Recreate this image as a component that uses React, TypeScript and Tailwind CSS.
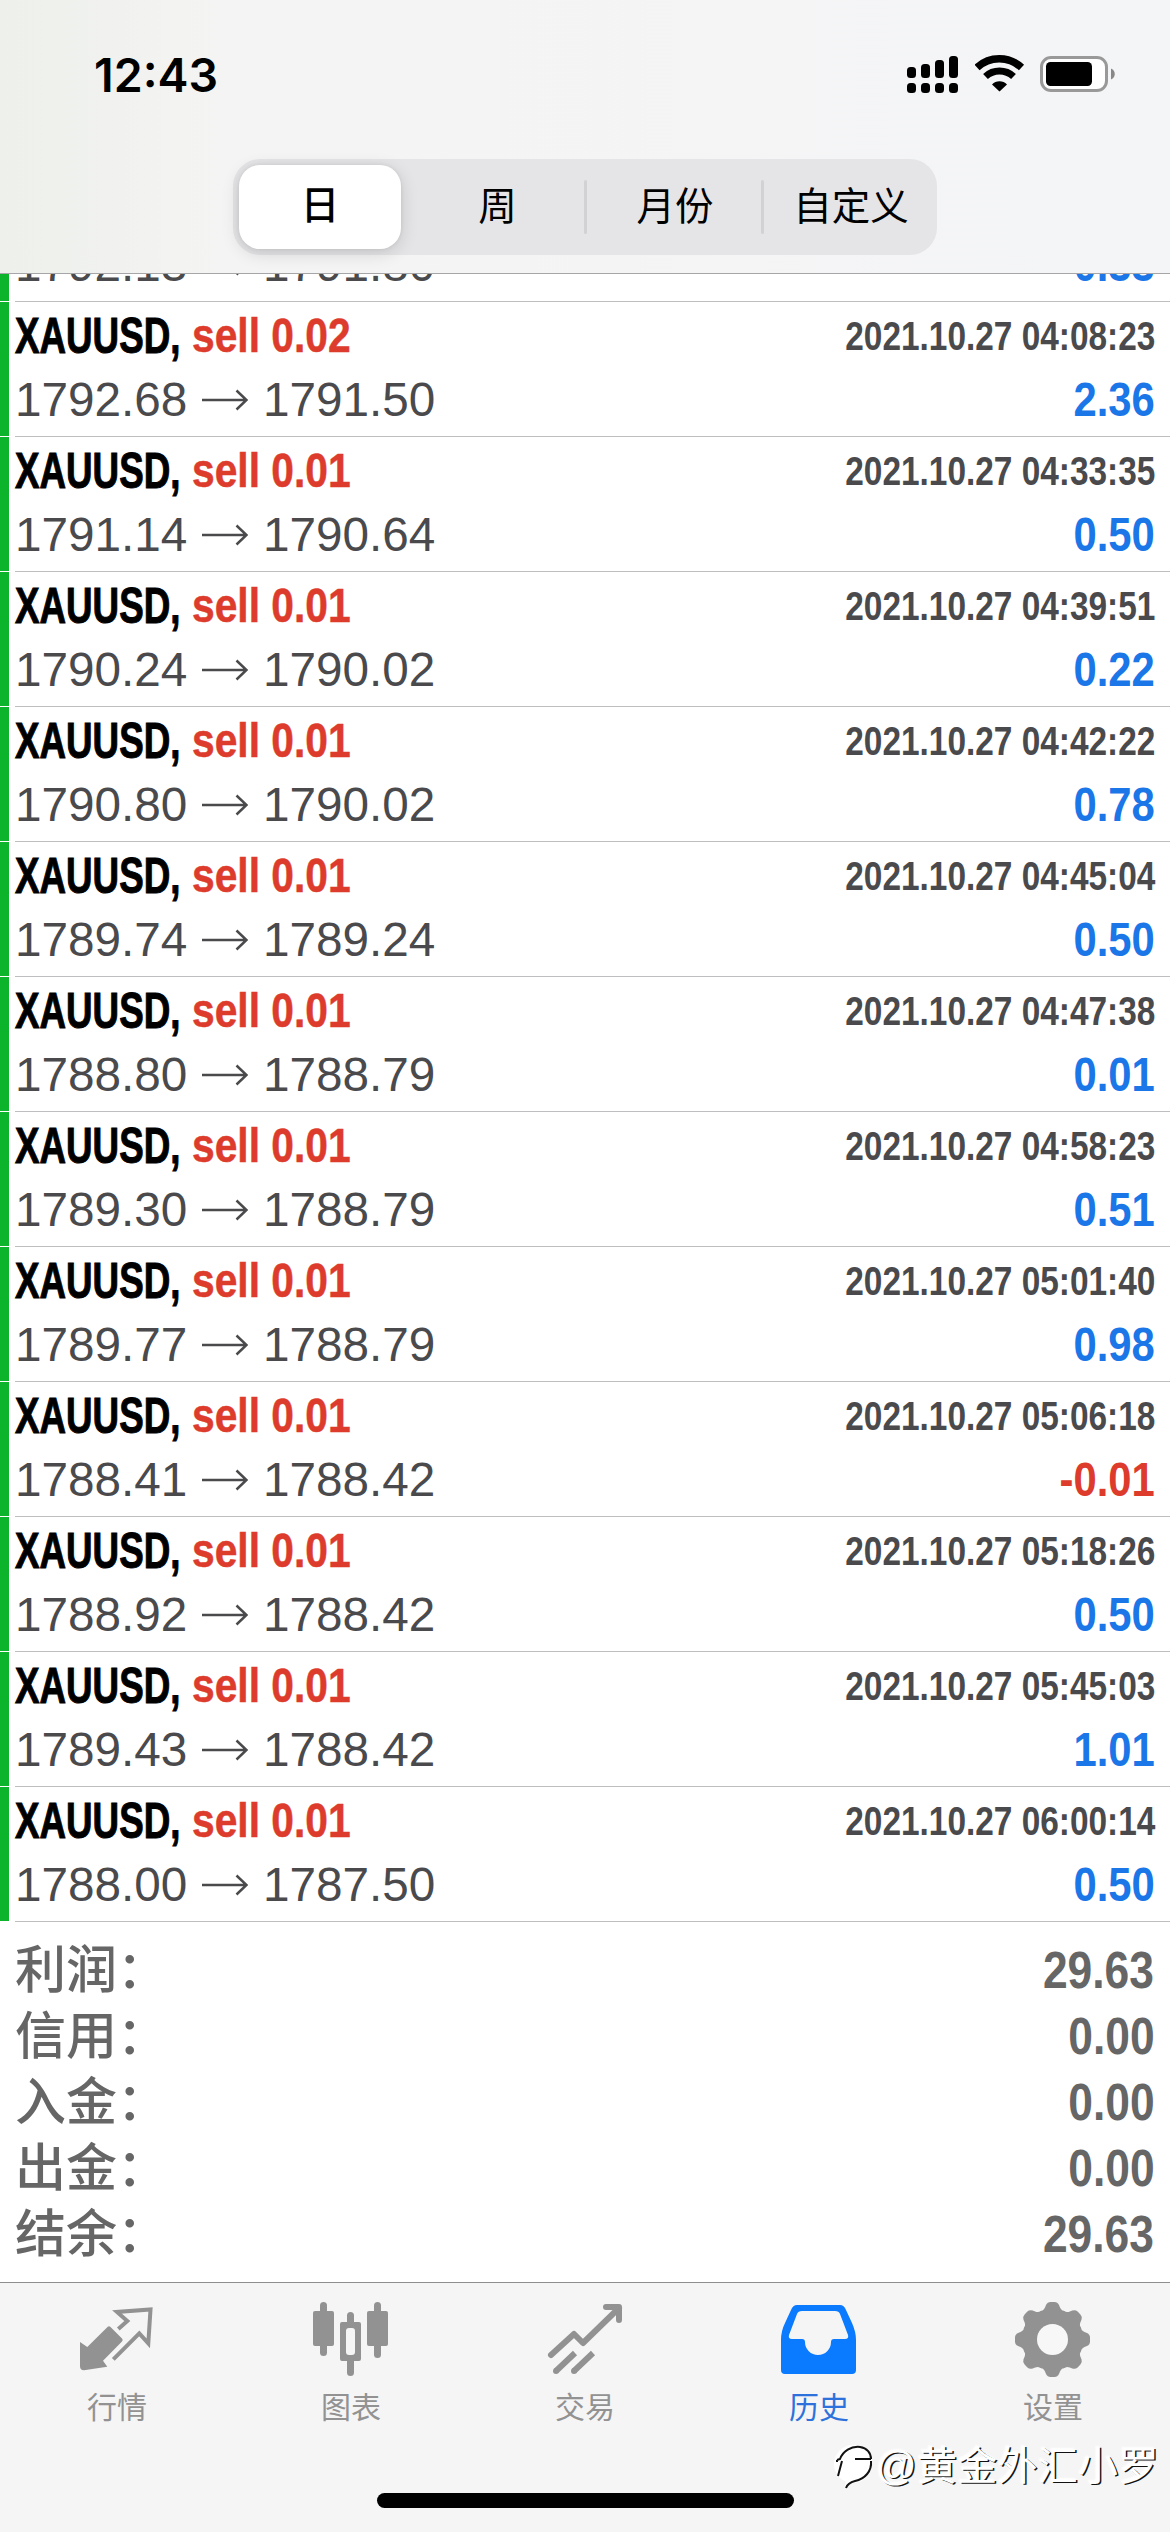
import type { ReactNode } from "react";

interface Deal {
  volume: string;
  open: string;
  close: string;
  time: string;
  profit: string;
}

const deals: Deal[] = [
  { volume: "0.02", open: "1792.68", close: "1791.50", time: "2021.10.27 04:08:23", profit: "2.36" },
  { volume: "0.01", open: "1791.14", close: "1790.64", time: "2021.10.27 04:33:35", profit: "0.50" },
  { volume: "0.01", open: "1790.24", close: "1790.02", time: "2021.10.27 04:39:51", profit: "0.22" },
  { volume: "0.01", open: "1790.80", close: "1790.02", time: "2021.10.27 04:42:22", profit: "0.78" },
  { volume: "0.01", open: "1789.74", close: "1789.24", time: "2021.10.27 04:45:04", profit: "0.50" },
  { volume: "0.01", open: "1788.80", close: "1788.79", time: "2021.10.27 04:47:38", profit: "0.01" },
  { volume: "0.01", open: "1789.30", close: "1788.79", time: "2021.10.27 04:58:23", profit: "0.51" },
  { volume: "0.01", open: "1789.77", close: "1788.79", time: "2021.10.27 05:01:40", profit: "0.98" },
  { volume: "0.01", open: "1788.41", close: "1788.42", time: "2021.10.27 05:06:18", profit: "-0.01" },
  { volume: "0.01", open: "1788.92", close: "1788.42", time: "2021.10.27 05:18:26", profit: "0.50" },
  { volume: "0.01", open: "1789.43", close: "1788.42", time: "2021.10.27 05:45:03", profit: "1.01" },
  { volume: "0.01", open: "1788.00", close: "1787.50", time: "2021.10.27 06:00:14", profit: "0.50" },
];

const totals = [
  { label: "利润", value: "29.63" },
  { label: "信用", value: "0.00" },
  { label: "入金", value: "0.00" },
  { label: "出金", value: "0.00" },
  { label: "结余", value: "29.63" },
];

export default function App() {
  return (
    <div className="flex h-[2532px] w-[1170px] flex-col overflow-hidden bg-white font-['Liberation_Sans','Noto_Sans_CJK_SC',sans-serif]">
      <header className="h-[274px] shrink-0 border-b border-[#a6a6a8] bg-linear-to-r from-[#edf0eb] via-[#f5f4f4] via-20% to-[#f4f5f7]">
        <StatusBar />
        <PeriodTabs />
      </header>
      <main className="flex-1">
        {/* row scrolled halfway under the header */}
        <div className="flex h-7 flex-col justify-end overflow-hidden">
          <PriceRow
            deal={{ volume: "0.01", open: "1792.13", close: "1791.80", time: "2021.10.27 04:02:11", profit: "0.33" }}
          />
        </div>
        {deals.map((deal) => (
          <DealRow key={deal.time} deal={deal} />
        ))}
        <Totals />
      </main>
      <TabBar />
    </div>
  );
}

function StatusBar() {
  return (
    <div className="flex h-[159px] items-start justify-between pr-[55px] pl-[94px]">
      <span className="mt-[46px] font-['Inter',sans-serif] text-[46.5px] leading-[58px] font-semibold">
        12:43
      </span>
      <div className="mt-[54px] flex h-10 items-start">
        <svg className="h-10 w-[68px]" viewBox="0 0 68 40">
          <rect x="0" y="13" width="9" height="11" rx="3.5" />
          <rect x="14" y="10" width="9" height="14" rx="3.5" />
          <rect x="28" y="6" width="9" height="18" rx="3.5" />
          <rect x="42" y="2" width="9" height="22" rx="3.5" />
          <rect x="0" y="29" width="9" height="10" rx="3.5" />
          <rect x="14" y="29" width="9" height="10" rx="3.5" />
          <rect x="28" y="29" width="9" height="10" rx="3.5" />
          <rect x="42" y="29" width="9" height="10" rx="3.5" />
        </svg>
        <svg className="h-10 w-[65px]" viewBox="0 0 65 40">
          <path d="M2 13.500a32.500 32.500 0 0 1 44.500 0" fill="none" stroke="#000" strokeWidth="7.500" />
          <path d="M10.500 22.500a20.500 20.500 0 0 1 28 0" fill="none" stroke="#000" strokeWidth="7" />
          <path d="M24.500 37.500l-7.500-7a10.500 10.500 0 0 1 15 0z" />
        </svg>
        <svg className="h-10 w-[75px]" viewBox="0 0 75 40">
          <rect x="1.500" y="3.500" width="65" height="33" rx="9.500" fill="#fff" stroke="#999" strokeWidth="3" />
          <rect x="6" y="8" width="46" height="24" rx="4.500" />
          <path d="M71 14.500v11c5-2 5-9 0-11z" fill="#888" />
        </svg>
      </div>
    </div>
  );
}

function PeriodTabs() {
  return (
    <div className="mx-auto flex h-24 w-[704px] items-center rounded-[27px] bg-[#e5e5e7] pl-[6px] text-[38.5px] leading-none">
      <div className="flex h-[84px] w-[162px] items-center justify-center rounded-[21px] bg-white pb-px font-medium shadow-[0_4px_18px_rgba(0,0,0,0.14),0_0_4px_rgba(0,0,0,0.08)]">
        日
      </div>
      <div className="flex w-[183px] justify-center pl-[10px]">周</div>
      <div className="h-[54px] w-[3px] rounded-full bg-[#d2d2d5]" />
      <div className="flex w-[174px] justify-center pl-[2px]">月份</div>
      <div className="h-[54px] w-[3px] rounded-full bg-[#d2d2d5]" />
      <div className="flex w-[173px] justify-center pl-px">自定义</div>
    </div>
  );
}

function DealRow({ deal }: { deal: Deal }) {
  return (
    <div className="flex h-[135px] shrink-0">
      <div className="h-[134px] w-[9px] bg-[#0cb42b]" />
      <div className="ml-[6px] flex-1 border-b border-[#bebec0] pt-[3px]">
        <div className="flex h-[62px] items-center whitespace-nowrap">
          <Condensed className="w-[177px] scale-x-[0.735] text-[50px] text-black [-webkit-text-stroke:1px_#000]">
            XAUUSD,
          </Condensed>
          <Condensed className="flex-1 scale-x-[0.832] text-[49px] text-[#dd3b2c] [-webkit-text-stroke:0.5px_#dd3b2c]">
            sell {deal.volume}
          </Condensed>
          <CondensedEnd className="scale-x-[0.835] pr-[18px] text-[40px] leading-[58px] text-[#4a4a4d]">
            {deal.time}
          </CondensedEnd>
        </div>
        <Prices deal={deal} />
      </div>
    </div>
  );
}

// only the second line of a row, for the one cut by the header
function PriceRow({ deal }: { deal: Deal }) {
  return (
    <div className="flex h-[70px] shrink-0">
      <div className="h-[69px] w-[9px] bg-[#0cb42b]" />
      <div className="ml-[6px] flex-1 border-b border-[#bebec0]">
        <Prices deal={deal} />
      </div>
    </div>
  );
}

function Prices({ deal }: { deal: Deal }) {
  const loss = deal.profit.startsWith("-");
  return (
    <div className="flex h-[66px] items-center justify-between text-[48px] text-[#4a4a4d]">
      <div className="flex items-center text-[47.7px]">
        <span className="w-[187px]">{deal.open}</span>
        <svg className="mr-[15px] h-6 w-[46px]" viewBox="0 0 46 24" fill="none" stroke="currentColor">
          <path d="M0 12h44M34.500 2.500l10 9.500-10 9.500" strokeWidth="2.500" />
        </svg>
        <span>{deal.close}</span>
      </div>
      <CondensedEnd
        className={loss ? "scale-x-[0.87] pr-[18px] text-[#dd3b2c]" : "scale-x-[0.87] pr-[18px] text-[#1b76e8]"}
      >
        {deal.profit}
      </CondensedEnd>
    </div>
  );
}

function Condensed({ className, children }: { className: string; children: ReactNode }) {
  return <span className={`inline-block origin-left font-bold ${className}`}>{children}</span>;
}

function CondensedEnd({ className, children }: { className: string; children: ReactNode }) {
  return <span className={`inline-block origin-right font-bold ${className}`}>{children}</span>;
}

function Totals() {
  return (
    <div className="pt-[16px] pl-[15px] font-bold text-[#666]">
      {totals.map((row) => (
        <div key={row.label} className="flex h-[66px] items-center justify-between">
          <span className="text-[51px] leading-[66px] font-medium">{row.label}：</span>
          <CondensedEnd className="scale-x-[0.87] pr-[18px] text-[51px] leading-[66px]">{row.value}</CondensedEnd>
        </div>
      ))}
    </div>
  );
}

function TabBar() {
  return (
    <nav className="relative h-[250px] shrink-0 border-t border-[#8e8e90] bg-[#f5f5f5]">
      <div className="flex pt-[18px] text-[30px] text-[#929292]">
        <Tab label="行情">
          <path
            d="M1 41l7.300 5L28.500 26q1.500-1.500 3 0L43 37.500q1.500 1.500 0 3L24 59.700l4.300 6L5 69.300q-4 0-4-4z"
            fill="currentColor"
          />
          <path
            d="M39.300 28l9-8L38 11l33.500-2.500-2.200 33.800-9-10-26 26"
            fill="none"
            stroke="currentColor"
            strokeWidth="4"
          />
        </Tab>
        <Tab label="图表">
          <g fill="currentColor">
            <rect x="0" y="10" width="21" height="35" rx="2" />
            <rect x="7" y="1" width="7" height="54" rx="3.500" />
            <rect x="54" y="10" width="21" height="35" rx="2" />
            <rect x="61" y="1" width="7" height="56" rx="3.500" />
            <path
              fillRule="evenodd"
              d="M34 21v-6.500a3.500 3.500 0 0 1 7 0V21h5q2 0 2 2v35q0 2-2 2h-5v11.500a3.500 3.500 0 0 1-7 0V60h-5q-2 0-2-2V23q0-2 2-2zM36 27q-3 0-3 3v21q0 3 3 3h3q3 0 3-3V30q0-3-3-3z"
            />
          </g>
        </Tab>
        <Tab label="交易">
          <g fill="none" stroke="currentColor" strokeWidth="6" strokeLinejoin="round">
            <path d="M4 54l23-21 9 9L72 7M59 6h13v13" strokeLinecap="round" />
            <path d="M9 70l19-18M27 70l19-18" />
          </g>
          <circle cx="9" cy="70" r="3" fill="currentColor" />
          <circle cx="27" cy="70" r="3" fill="currentColor" />
        </Tab>
        <Tab label="历史" active>
          <path
            fillRule="evenodd"
            fill="#0a7aff"
            d="M16 4h43q4 0 6 5l6 13q4 9 4 17v30q0 4-4 4H4q-4 0-4-4V39q0-9 4-17l6-13q2-5 6-5zM21 10q-4 0-5 3L8 34q-1 4 3 4h10q3 0 3 3a13 13 0 0 0 26 0q0-3 3-3h11q4 0 3-4l-8-21q-1-3-5-3z"
          />
        </Tab>
        <Tab label="设置">
          <Gear />
        </Tab>
      </div>
      <div className="absolute top-[210px] left-[377px] h-[15px] w-[417px] rounded-full bg-black" />
      <Watermark />
    </nav>
  );
}

function Tab({ label, active, children }: { label: string; active?: boolean; children: ReactNode }) {
  return (
    <div className={active ? "flex w-[234px] flex-col items-center text-[#2d72dc]" : "flex w-[234px] flex-col items-center"}>
      <svg className="h-[76px] w-[76px]" viewBox="0 0 76 76">
        {children}
      </svg>
      <span className="mt-[9px] leading-[44px]">{label}</span>
    </div>
  );
}

function Gear() {
  return (
    <g transform="translate(37.500 38.500)" fill="currentColor">
      {[0, 45, 90, 135, 180, 225, 270, 315].map((angle) => (
        <path
          key={angle}
          transform={`rotate(${angle})`}
          d="M-13-28q4-.5 5.500-4l1-2.500q1.500-3 4.500-3h4q3 0 4.500 3l1 2.500q1.500 3.500 5.500 4L0 0z"
        />
      ))}
      <circle r="29.500" />
      <circle r="15.500" fill="#f7f7f7" />
    </g>
  );
}

function Watermark() {
  return (
    <div className="absolute top-[157px] left-[833px] flex items-center whitespace-nowrap text-[40px] leading-[52px] text-white [text-shadow:1.500px_0.500px_0_#111,-1px_-1px_2px_#fff]">
      <svg className="mr-[3px] h-[47px] w-[40px]" viewBox="0 0 40 47">
        <circle cx="20" cy="21" r="19" fill="#fff" />
        <path d="M13 36l-1 9 10-8z" fill="#fff" />
        <path
          d="M4 17l3-1c3-8 11-13 20-12 7 1 11 6 11 12M22 16h16M4 17v2M9 18l-4 15M38 18c1 10-6 18-16 20-4 1-8 4-9 7"
          fill="none"
          stroke="#111"
          strokeWidth="2"
        />
      </svg>
      <span className="tracking-[0.3px]">@黄金外汇小罗</span>
    </div>
  );
}
